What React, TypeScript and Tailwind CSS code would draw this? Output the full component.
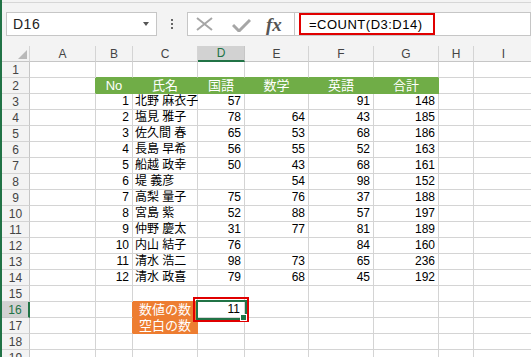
import React from 'react';

type Val = string | number | null;

const data: Val[][] = [
  [1, '北野 麻衣子', 57, null, 91, 148],
  [2, '塩見 雅子', 78, 64, 43, 185],
  [3, '佐久間 春', 65, 53, 68, 186],
  [4, '長島 早希', 56, 55, 52, 163],
  [5, '船越 政幸', 50, 43, 68, 161],
  [6, '堤 義彦', null, 54, 98, 152],
  [7, '高梨 量子', 75, 76, 37, 188],
  [8, '宮島 紫', 52, 88, 57, 197],
  [9, '仲野 慶太', 31, 77, 81, 189],
  [10, '内山 結子', 76, null, 84, 160],
  [11, '清水 浩二', 98, 73, 65, 236],
  [12, '清水 政喜', 79, 68, 45, 192],
];

const heads = ['No', '氏名', '国語', '数学', '英語', '合計'];
const letters = ['A', 'B', 'C', 'D', 'E', 'F', 'G', 'H', 'I'];

function Cell({ r, c }: { r: number; c: number }) {
  const isGreen = r === 2 && c >= 2 && c <= 7;
  const isOrange = (r === 16 || r === 17) && c === 3;
  let right = 'border-r-[#d4d4d4]';
  if (isGreen || (r === 2 && c === 1)) right = 'border-r-[#70ad47]';
  else if (isOrange || ((r === 16 || r === 17) && c === 2)) right = 'border-r-[#ed7d31]';
  let bottom = 'border-b-[#d4d4d4]';
  if (isGreen || (r === 1 && c >= 2 && c <= 7)) bottom = 'border-b-[#70ad47]';
  else if (isOrange || (r === 15 && c === 3)) bottom = 'border-b-[#ed7d31]';

  let bg = 'bg-white';
  if (isGreen) bg = 'bg-[#70ad47]';
  if (isOrange) bg = 'bg-[#ed7d31]';

  let content: React.ReactNode = null;
  let align = 'justify-end pr-[3px]';
  let color = 'text-black';
  let size = 'text-[12px]';

  if (isGreen) {
    content = heads[c - 2];
    align = 'justify-center';
    color = 'text-white';
    size = 'text-[13px]';
  } else if (r >= 3 && r <= 14 && c >= 2 && c <= 7) {
    const v = data[r - 3][c - 2];
    content = v;
    if (c === 3) align = 'justify-start pl-[2px]';
  } else if (isOrange) {
    content = r === 16 ? '数値の数' : '空白の数';
    align = 'justify-center';
    color = 'text-white';
    size = 'text-[13px]';
  } else if (r === 16 && c === 4) {
    content = 11;
    align = 'justify-end pr-[4px]';
  }

  const selected = r === 16 && c === 4;

  return (
    <div
      className={`relative h-[16px] border-r border-b ${right} ${bottom} ${bg} ${color} ${size} flex items-end ${align} leading-[15px] whitespace-nowrap ${selected ? 'z-10' : ''}`}
    >
      {selected && (
        <>
          <div className="absolute -left-[5px] -top-[5px] w-[56px] h-[25px] border-2 border-[#e00000]" />
          <div className="absolute -left-[2px] -top-[2px] w-[51px] h-[20px] border-2 border-[#217346]" />
          <div className="absolute left-[42px] top-[12px] w-[7px] h-[7px] border border-white bg-[#217346]" />
        </>
      )}
      <span className="relative">{content}</span>
    </div>
  );
}

export default function App() {
  const rows = Array.from({ length: 19 }, (_, i) => i + 1);
  return (
    <div className="w-[531px] h-[357px] overflow-hidden flex bg-[#f3f3f3] font-['Liberation_Sans','Noto_Sans_CJK_JP',sans-serif]">
      <div className="w-[2px] shrink-0 bg-[#217346]" />
      <div className="flex-1 flex flex-col min-w-0">
        {/* top strip */}
        <div className="h-[3px] shrink-0 border-b border-[#d6d6d6]" />
        {/* formula bar */}
        <div className="mt-[9px] h-[24px] shrink-0 flex items-stretch">
          <div className="ml-[4px] w-[151px] border border-[#c6c6c6] bg-white flex items-center justify-between">
            <span className="pl-[6px] text-[14px] text-[#222] leading-none tracking-[0.5px]">D16</span>
            <svg width="6" height="4" viewBox="0 0 6 4" className="mr-[7px]">
              <path d="M0 0 L6 0 L3 4 Z" fill="#555" />
            </svg>
          </div>
          <div className="ml-[14px] flex flex-col justify-center gap-[2px]">
            <div className="w-[2px] h-[2px] bg-[#666]" />
            <div className="w-[2px] h-[2px] bg-[#666]" />
            <div className="w-[2px] h-[2px] bg-[#666]" />
          </div>
          <div className="ml-[14px] w-[108px] border border-[#c6c6c6] bg-white flex items-center pl-[8px]">
            <svg width="17" height="14" viewBox="0 0 17 14">
              <path d="M1 1 L16 13 M16 1 L1 13" stroke="#a6a6a6" strokeWidth="2" fill="none" />
            </svg>
            <svg width="19" height="13" viewBox="0 0 19 13" className="ml-[19px] mt-[2px]">
              <path d="M1 6 L7 12 L18 1" stroke="#a6a6a6" strokeWidth="3" fill="none" />
            </svg>
            <span className="ml-[15px] font-['Liberation_Serif',serif] italic font-bold text-[19px] text-[#555] leading-none">fx</span>
          </div>
          <div className="flex-1 border-y border-r border-[#c6c6c6] bg-white flex items-start">
            <div className="ml-[4px] w-[136px] h-[22px] shrink-0 border-2 border-[#e00000] flex items-center pl-[8px]">
              <span className="text-[13px] text-black leading-none tracking-[0.5px] whitespace-nowrap">=COUNT(D3:D14)</span>
            </div>
          </div>
        </div>
        <div className="h-[10px] shrink-0" />
        {/* grid */}
        <div className="grid grid-cols-[28px_66px_37px_65px_47px_64px_65px_65px_35px_60px] bg-white">
          {/* header row */}
          <div className="relative h-[16px] bg-[#f3f3f3] border-r border-b border-r-[#d4d4d4] border-b-[#c6c6c6]">
            <svg width="9" height="9" viewBox="0 0 9 9" className="absolute left-[16px] top-[4px]">
              <path d="M9 0 L9 9 L0 9 Z" fill="#b9b9b9" />
            </svg>
          </div>
          {letters.map((l) => (
            <div
              key={l}
              className={
                l === 'D'
                  ? 'h-[16px] bg-[#d2d2d2] border-r border-b-2 border-r-[#c6c6c6] border-b-[#217346] text-[#217346] text-[12px] flex items-center justify-center leading-none'
                  : 'h-[16px] bg-[#f3f3f3] border-r border-b border-r-[#d4d4d4] border-b-[#c6c6c6] text-[#444] text-[12px] flex items-center justify-center leading-none'
              }
            >
              {l}
            </div>
          ))}
          {rows.map((r) => (
            <React.Fragment key={r}>
              <div
                className={
                  r === 16
                    ? 'h-[16px] bg-[#d2d2d2] border-r-2 border-b border-r-[#217346] border-b-[#c6c6c6] text-[#217346] text-[12px] flex items-center justify-center leading-none'
                    : 'h-[16px] bg-[#f3f3f3] border-r border-b border-r-[#c6c6c6] border-b-[#d4d4d4] text-[#444] text-[12px] flex items-center justify-center leading-none'
                }
              >
                {r}
              </div>
              {letters.map((_, ci) => (
                <Cell key={ci} r={r} c={ci + 1} />
              ))}
            </React.Fragment>
          ))}
        </div>
      </div>
    </div>
  );
}
